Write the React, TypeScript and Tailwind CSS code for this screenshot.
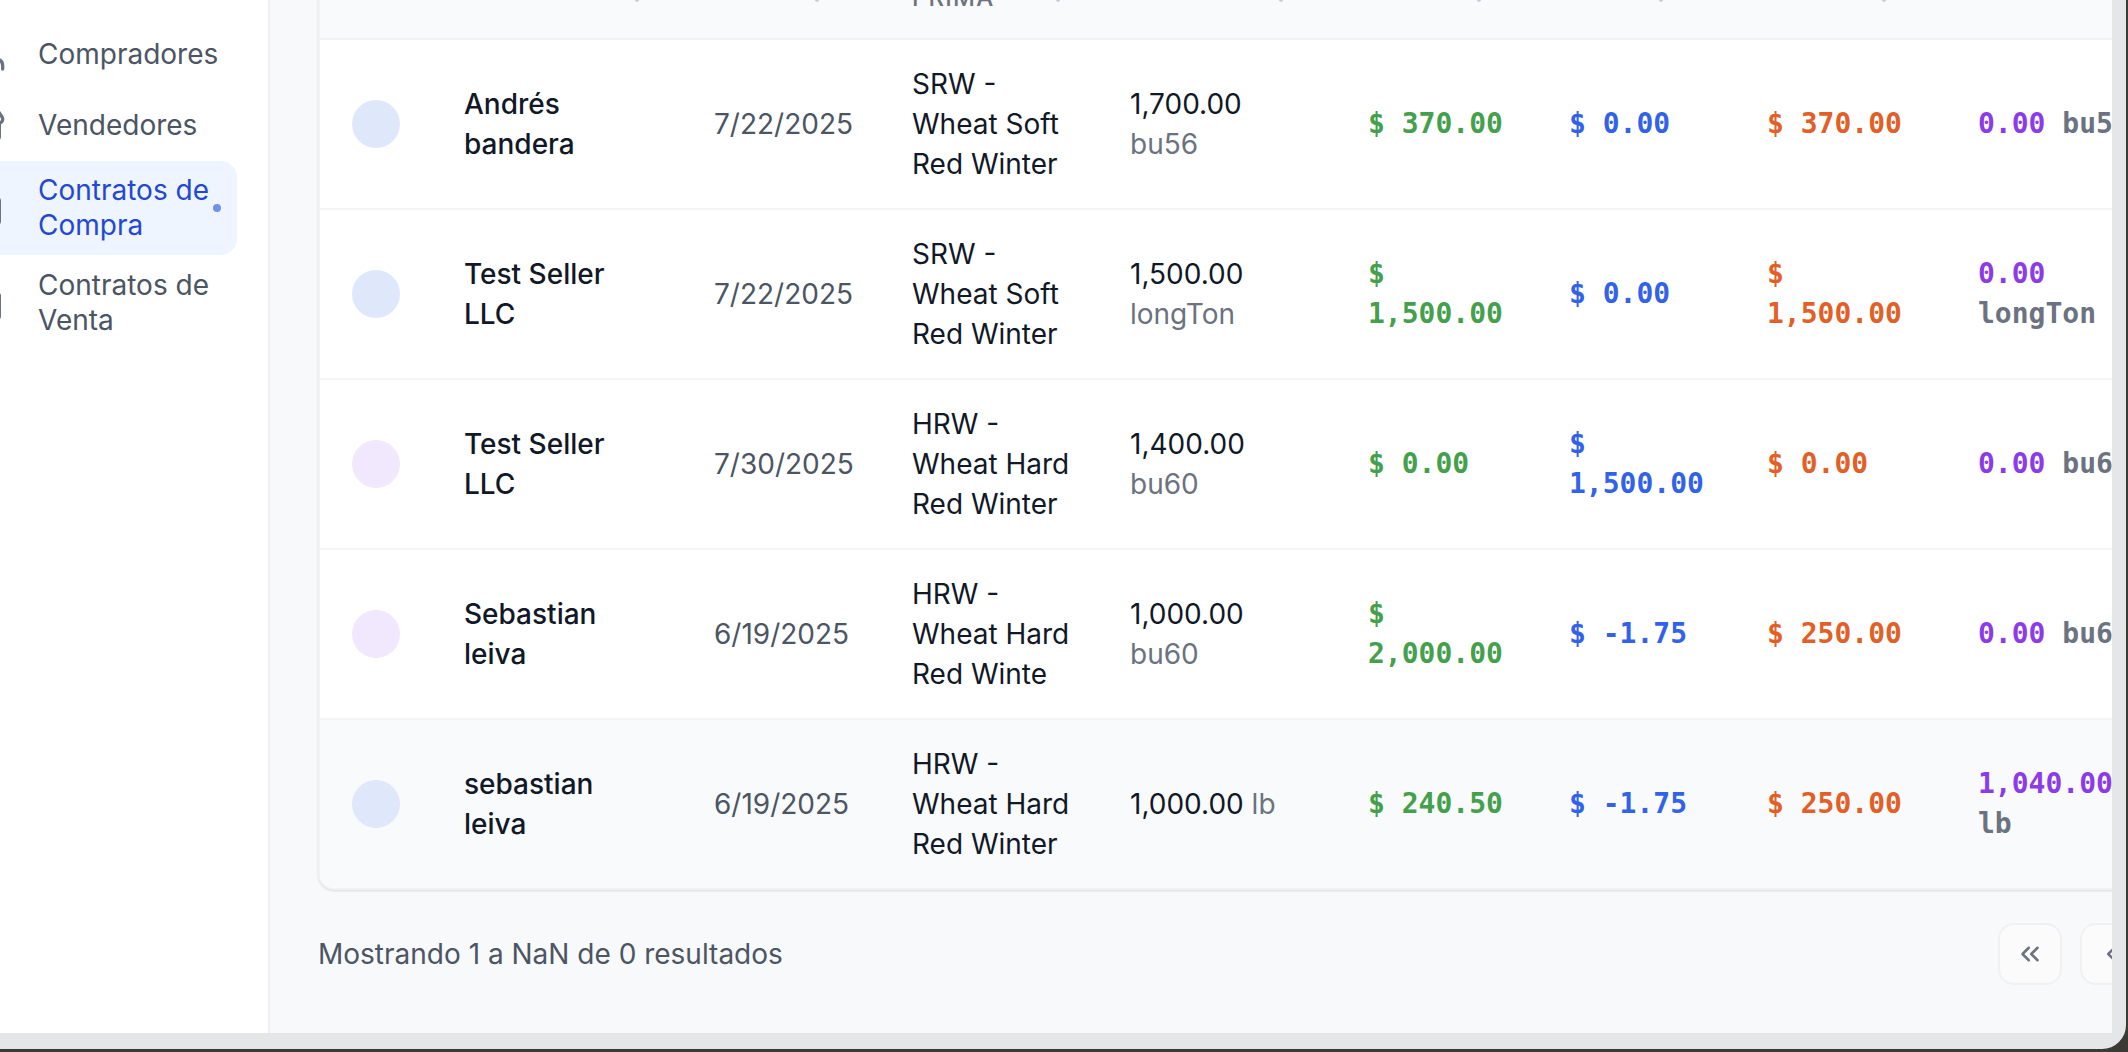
import { Users, Store, FileText, FileCheck, ChevronsLeft, ChevronsRight, ChevronLeft, ChevronRight } from 'lucide-react';

type Row = {
  name: string;
  date: string;
  product: string;
  qty: string;
  unit: string;
  green: string;
  blue: string;
  orange: string;
  left: string;
  leftUnit: string;
  purpleAvatar?: boolean;
  muted?: boolean;
};

const rows: Row[] = [
  { name: 'Andrés bandera', date: '7/22/2025', product: 'SRW - Wheat Soft Red Winter', qty: '1,700.00', unit: 'bu56', green: '$ 370.00', blue: '$ 0.00', orange: '$ 370.00', left: '0.00', leftUnit: 'bu56' },
  { name: 'Test Seller LLC', date: '7/22/2025', product: 'SRW - Wheat Soft Red Winter', qty: '1,500.00', unit: 'longTon', green: '$ 1,500.00', blue: '$ 0.00', orange: '$ 1,500.00', left: '0.00', leftUnit: 'longTon' },
  { name: 'Test Seller LLC', date: '7/30/2025', product: 'HRW - Wheat Hard Red Winter', qty: '1,400.00', unit: 'bu60', green: '$ 0.00', blue: '$ 1,500.00', orange: '$ 0.00', left: '0.00', leftUnit: 'bu60', purpleAvatar: true },
  { name: 'Sebastian leiva', date: '6/19/2025', product: 'HRW - Wheat Hard Red Winte', qty: '1,000.00', unit: 'bu60', green: '$ 2,000.00', blue: '$ -1.75', orange: '$ 250.00', left: '0.00', leftUnit: 'bu60', purpleAvatar: true },
  { name: 'sebastian leiva', date: '6/19/2025', product: 'HRW - Wheat Hard Red Winter', qty: '1,000.00', unit: 'lb', green: '$ 240.50', blue: '$ -1.75', orange: '$ 250.00', left: '1,040.00', leftUnit: 'lb', muted: true },
];

const headers = ['', 'Proveedor', 'Fecha', 'Materia Prima', 'Cantidad', 'Precio', 'Basis', 'Ajuste', 'Entrega'];

function SortIcon() {
  return (
    <svg width="16" height="44" viewBox="0 0 16 44" fill="none" stroke="#c9cdd3" strokeWidth="2" strokeLinecap="round" strokeLinejoin="round" className="shrink-0">
      <path d="M3 8l5-5 5 5" />
      <path d="M3 36l5 5 5-5" />
    </svg>
  );
}

function NavItem({ icon, label, active }: { icon: React.ReactNode; label: string; active?: boolean }) {
  return (
    <div
      className={`flex items-center w-[295px] min-h-[70px] py-[12px] pl-[24px] pr-[16px] rounded-[16px] ${
        active ? 'bg-[#eff5ff] text-[#2348d4]' : 'text-[#4b5563]'
      }`}
    >
      <span className="w-[40px] h-[40px] shrink-0 mr-[32px] text-[#6b7280]">{icon}</span>
      <span className="w-[175px] text-[28px] leading-[35px]">{label}</span>
      {active && <span className="w-[8px] h-[8px] rounded-full bg-[#7090ee]" />}
    </div>
  );
}

function PageButton({ children }: { children: React.ReactNode }) {
  return (
    <button className="w-[64px] h-[62px] flex items-center justify-center rounded-[16px] border-2 border-[#f0f1f3] bg-[#fbfbfb] text-[#6b7280] text-[28px]">
      {children}
    </button>
  );
}

export default function App() {
  const td = 'px-[32px] py-[24px] align-middle border-b-2 border-[#f3f4f6]';
  const mono = "font-['DejaVu_Sans_Mono',monospace] font-bold text-[28px] leading-[40px]";

  return (
    <div className="w-[2128px] h-[1052px] bg-[#3b3a35] overflow-hidden font-['Inter',sans-serif]">
      <div className="w-[2126px] h-[1049px] bg-[#e5e6e8] rounded-br-[24px] overflow-hidden">
        <div className="flex w-[2112px] h-[1033px] overflow-hidden bg-[#f8f9fb]">
          {/* sidebar */}
          <aside className="w-[270px] shrink-0 h-full bg-white border-r-2 border-[#eef0f3] overflow-hidden">
            <div className="w-[360px] -ml-[90px] pl-[32px] pt-[19px] flex flex-col gap-[1px]">
              <NavItem icon={<Users size={40} strokeWidth={2} />} label="Compradores" />
              <NavItem icon={<Store size={40} strokeWidth={2} />} label="Vendedores" />
              <NavItem icon={<FileText size={40} strokeWidth={2} />} label="Contratos de Compra" active />
              <NavItem icon={<FileCheck size={40} strokeWidth={2} />} label="Contratos de Venta" />
            </div>
          </aside>

          {/* main */}
          <main className="flex-1 min-w-0 h-full overflow-hidden pl-[48px]">
            <div className="-mt-[76px] w-max bg-white border-2 border-[#f1f2f4] rounded-[16px] shadow-sm overflow-hidden">
              <table className="table-fixed border-separate border-spacing-0 w-[1846px]">
                <colgroup>
                  <col className="w-[112px]" />
                  <col className="w-[250px]" />
                  <col className="w-[198px]" />
                  <col className="w-[218px]" />
                  <col className="w-[238px]" />
                  <col className="w-[201px]" />
                  <col className="w-[198px]" />
                  <col className="w-[211px]" />
                  <col className="w-[220px]" />
                </colgroup>
                <thead>
                  <tr className="bg-[#f9fafb]">
                    {headers.map((h, i) => (
                      <th
                        key={i}
                        className="px-[32px] py-[24px] h-[114px] align-middle text-left border-b-2 border-[#f1f2f4]"
                      >
                        {h && (
                          <div className="flex items-center gap-[8px]">
                            <span className="text-[24px] leading-[32px] font-medium uppercase tracking-[0.05em] text-[#6b7280]">
                              {h}
                            </span>
                            <SortIcon />
                          </div>
                        )}
                      </th>
                    ))}
                  </tr>
                </thead>
                <tbody>
                  {rows.map((r, i) => {
                    const last = i === rows.length - 1;
                    const cell = last ? 'px-[32px] py-[24px] align-middle' : td;
                    return (
                      <tr key={i} className={r.muted ? 'bg-[#f9fafb]' : 'bg-white'}>
                        <td className={cell}>
                          <div className={`w-[48px] h-[48px] rounded-full ${r.purpleAvatar ? 'bg-[#f1e8fd]' : 'bg-[#dfe8fb]'}`} />
                        </td>
                        <td className={cell}>
                          <div className="w-[175px] text-[28px] leading-[40px] font-medium text-[#111827]">{r.name}</div>
                        </td>
                        <td className={cell}>
                          <div className="whitespace-nowrap text-[28px] leading-[40px] text-[#4b5563]">{r.date}</div>
                        </td>
                        <td className={cell}>
                          <div className="w-[162px] text-[28px] leading-[40px] text-[#111827]">{r.product}</div>
                        </td>
                        <td className={cell}>
                          <div className="text-[28px] leading-[40px] text-[#111827]">
                            {r.qty} <span className="text-[#6b7280]">{r.unit}</span>
                          </div>
                        </td>
                        <td className={cell}>
                          <div className={`${mono} text-[#44a04c]`}>{r.green}</div>
                        </td>
                        <td className={cell}>
                          <div className={`${mono} text-[#3262e8]`}>{r.blue}</div>
                        </td>
                        <td className={cell}>
                          <div className={`${mono} text-[#e25f27]`}>{r.orange}</div>
                        </td>
                        <td className={cell}>
                          <div className={mono}>
                            <span className="text-[#8c3be8]">{r.left}</span>{' '}
                            <span className="text-[#6b7280]">{r.leftUnit}</span>
                          </div>
                        </td>
                      </tr>
                    );
                  })}
                </tbody>
              </table>
            </div>

            {/* pagination */}
            <div className="mt-[33px] w-[2072px] flex items-center justify-between">
              <p className="text-[28px] leading-[40px] text-[#4b5563]">Mostrando 1 a NaN de 0 resultados</p>
              <div className="flex items-center gap-[18px]">
                <PageButton>
                  <ChevronsLeft size={30} strokeWidth={2} />
                </PageButton>
                <PageButton>
                  <ChevronLeft size={30} strokeWidth={2} />
                </PageButton>
                <PageButton>1</PageButton>
                <PageButton>
                  <ChevronRight size={30} strokeWidth={2} />
                </PageButton>
                <PageButton>
                  <ChevronsRight size={30} strokeWidth={2} />
                </PageButton>
              </div>
            </div>
          </main>
        </div>
      </div>
    </div>
  );
}
